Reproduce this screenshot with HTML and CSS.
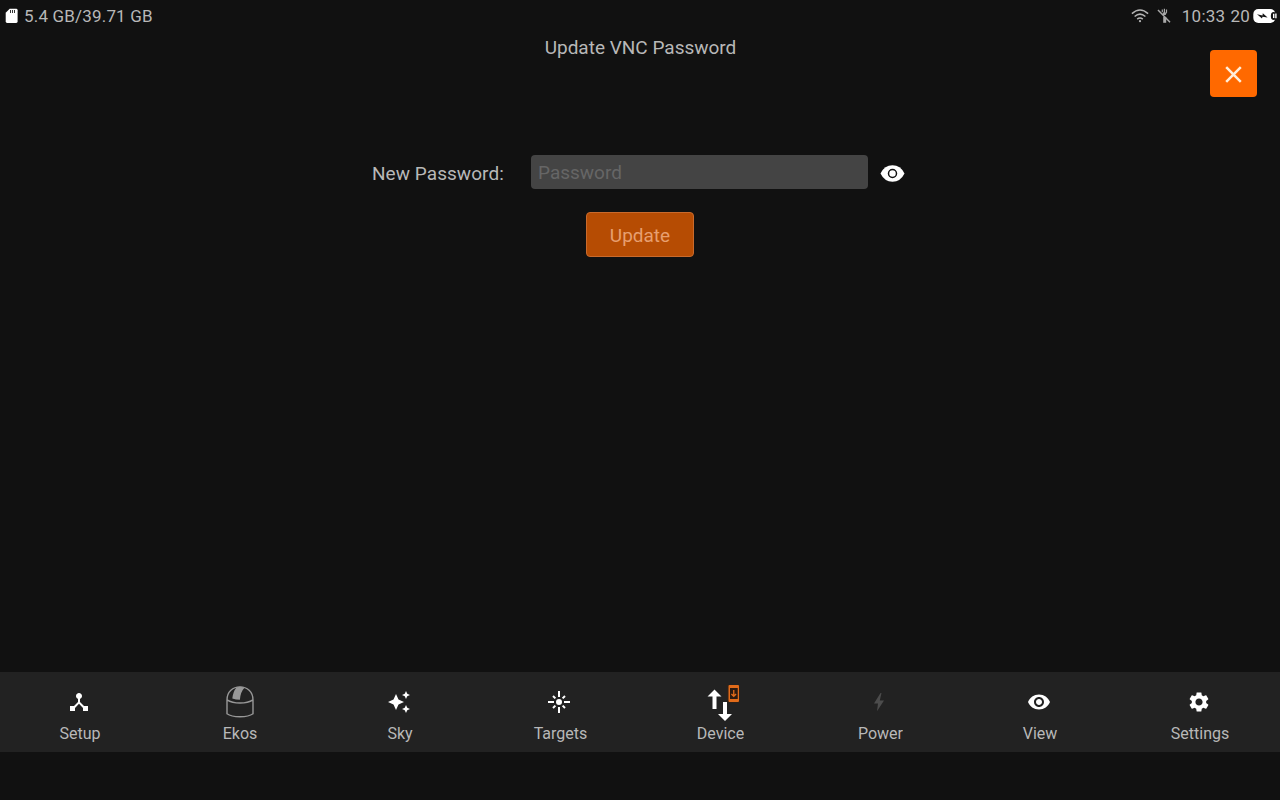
FILE: index.html
```
<!DOCTYPE html>
<html lang="en">
<head>
<meta charset="utf-8">
<title>Update VNC Password</title>
<link rel="stylesheet" href="styles.css">
</head>
<body>
<header class="status">
  <div class="storage">
    <svg width="13" height="16" viewBox="0 0 13 16"><path fill="#fff" d="M4.7 .8H11.2Q12.6 .8 12.6 2.2V13.6Q12.6 15 11.2 15H2.1Q.7 15 .7 13.6V4.8Z"/><path stroke="#333" stroke-width="1" d="M5.5 2v3M7.5 2v3M9.5 2v3"/></svg>
    <span class="storage-text">5.4 GB/39.71 GB</span>
  </div>
  <div class="indicators">
    <svg class="wifi" width="18" height="14" viewBox="0 0 18 14" fill="none" stroke="#b4b4b4" stroke-width="1.5"><path d="M.9 4.6Q9-2.6 17.1 4.6M3.6 7.5Q9 2.8 14.4 7.5M6.2 10.1Q9 7.8 11.8 10.1"/><circle cx="9" cy="12.2" r="1.1" fill="#b4b4b4" stroke="none"/></svg>
    <svg class="mount" width="14" height="16" viewBox="0 0 14 16" fill="none" stroke="#a8a8a8"><path stroke-width="1.5" d="M1 2L13 14.2"/><path stroke-width="1.2" d="M5.3 1.5V4M7.4 .8V5M9.5 1.5V4.3L8 6.5"/><path stroke-width="3" d="M7.2 4.5V7"/><path stroke-width="3" d="M7.7 9V14.8"/></svg>
    <span class="clock">10:33</span>
    <span class="level">20</span>
    <svg class="battery" width="24" height="16" viewBox="0 0 24 16"><rect x=".3" y="1" width="22" height="14" rx="5" fill="#fff"/><path fill="#151515" d="M4 6.200L9.500 7.400L9.800 5.200L14.600 9.400L9.500 8.700L9 10.600Z"/><ellipse cx="20.700" cy="7.900" rx="2.900" ry="4" fill="#151515"/><path stroke="#fff" stroke-width="1.400" d="M20.700 5.700v4.400M22.900 5.500v4.800"/></svg>
  </div>
</header>
<main class="page">
  <div class="heading">
    <h1 class="title">Update VNC Password</h1>
    <button class="close" aria-label="Close"><svg width="17" height="17" viewBox="0 0 17 17"><path d="M1.2 1.2L15.8 15.8M15.8 1.2L1.2 15.8" stroke="#ffeeda" stroke-width="2.500"/></svg></button>
  </div>
  <form class="form">
    <div class="row">
      <label class="label" for="password">New Password:</label>
      <input class="field" id="password" type="password" placeholder="Password">
      <svg class="reveal" width="25" height="17" viewBox="0 0 25 17"><path fill="#fff" d="M.5 8.500Q4.500 .3 12.500 .3T24.500 8.500Q20.500 16.700 12.500 16.700T.5 8.500Z"/><circle cx="12.500" cy="8.500" r="4" fill="none" stroke="#111" stroke-width="1.500"/></svg>
    </div>
    <button class="update" type="button" disabled>Update</button>
  </form>
</main>
<nav class="nav">
  <a class="item"><span class="icon"><svg width="24" height="24" viewBox="0 0 24 24"><path fill="#fff" d="M17 16l-4-4V8.820C14.160 8.400 15 7.300 15 6c0-1.660-1.340-3-3-3S9 4.340 9 6c0 1.300.84 2.400 2 2.820V12l-4 4H3v5h5v-3.050l4-4.200 4 4.200V21h5v-5h-4z"/></svg></span><span class="name">Setup</span></a>
  <a class="item"><span class="icon dome"><svg width="28" height="32" viewBox="0 0 28 32" fill="none" stroke="#989898" stroke-width="1.400"><path d="M1 14C1 5.500 7 .9 14 .9S27 5.500 27 14V27.800Q23 30.800 14 30.800T1 27.800ZM1 13.800Q6 17 14 17T27 13.800"/><path fill="#989898" stroke="none" d="M10.500 1.500Q14.800-.2 18.300 2Q14.400 6 13.900 13.800Q9.800 13.700 6.300 12.500Q7 5.500 10.500 1.500Z"/></svg></span><span class="name">Ekos</span></a>
  <a class="item"><span class="icon"><svg width="24" height="24" viewBox="0 0 24 24"><path fill="#fff" d="M19 9l1.250-2.750L23 5l-2.750-1.250L19 1l-1.250 2.750L15 5l2.750 1.250L19 9zm-7.500.5L9 4 6.500 9.500 1 12l5.500 2.500L9 20l2.500-5.500L17 12l-5.500-2.500zM19 15l-1.250 2.750L15 19l2.750 1.250L19 23l1.250-2.750L23 19l-2.750-1.250L19 15z"/></svg></span><span class="name">Sky</span></a>
  <a class="item"><span class="icon"><svg width="24" height="24" viewBox="0 0 24 24"><path stroke="#fff" stroke-width="2" d="M12 1v6M12 17v6M1 12h6M17 12h6M6 6l2.400 2.400M15.600 15.600L18 18M18 6l-2.400 2.400M8.400 15.600L6 18"/><circle cx="12" cy="12" r="3" fill="#fff"/></svg></span><span class="name clipped">Targets</span></a>
  <a class="item"><span class="icon transfer"><svg width="34" height="36" viewBox="0 0 34 36"><path fill="#fff" d="M7.500 4.400L14.500 11.400H9.500V24H5.500V11.400H.5ZM16 17H20V29H25L18 36L11 29H16Z"/><path fill="#3a2110" d="M20-.5H33V18H20Z" opacity=".45"/><path fill="#e16b1a" fill-rule="evenodd" d="M22.500 0H31Q32 0 32 1V16Q32 17 31 17H22.500Q21.500 17 21.500 16V1Q21.500 0 22.500 0ZM23 3V14H30.500V3Z"/><path fill="#2b1a10" d="M23 3H30.500V14H23Z"/><path stroke="#e16b1a" stroke-width="1.300" fill="none" d="M26.750 5V11.300M24.400 9L26.750 11.300L29.100 9"/></svg></span><span class="name clipped">Device</span></a>
  <a class="item"><span class="icon"><svg width="24" height="24" viewBox="0 0 24 24"><path fill="#4c4c4c" d="M13.500 3L7 13.600h4L10 21.200l7-10.700h-4.200L14.500 3Z"/></svg></span><span class="name clipped">Power</span></a>
  <a class="item"><span class="icon"><svg width="24" height="24" viewBox="0 0 24 24"><path fill="#fff" d="M12 4.500C7 4.500 2.730 7.610 1 12c1.730 4.390 6 7.500 11 7.500s9.270-3.110 11-7.500c-1.730-4.390-6-7.500-11-7.500zM12 17c-2.760 0-5-2.240-5-5s2.240-5 5-5 5 2.240 5 5-2.240 5-5 5zm0-8c-1.660 0-3 1.340-3 3s1.340 3 3 3 3-1.340 3-3-1.340-3-3-3z"/></svg></span><span class="name">View</span></a>
  <a class="item"><span class="icon"><svg width="24" height="24" viewBox="0 0 24 24"><path fill="#fff" d="M19.140 12.940c.04-.3.06-.61.06-.94 0-.32-.02-.64-.07-.94l2.030-1.580c.18-.14.23-.41.12-.61l-1.920-3.320c-.12-.22-.37-.29-.59-.22l-2.390.96c-.5-.38-1.030-.7-1.620-.94l-.36-2.540c-.04-.24-.24-.41-.48-.41h-3.840c-.24 0-.43.17-.47.41l-.36 2.540c-.59.24-1.130.57-1.620.94l-2.390-.96c-.22-.08-.47 0-.59.22L2.740 8.870c-.12.21-.08.47.12.61l2.030 1.580c-.05.3-.09.63-.09.94s.02.64.07.94l-2.030 1.580c-.18.14-.23.41-.12.61l1.920 3.320c.12.22.37.29.59.22l2.390-.96c.5.38 1.030.7 1.620.94l.36 2.540c.05.24.24.41.48.41h3.840c.24 0 .44-.17.47-.41l.36-2.540c.59-.24 1.130-.56 1.620-.94l2.390.96c.22.08.47 0 .59-.22l1.920-3.320c.12-.22.07-.47-.12-.61l-2.010-1.580zM12 15.600c-1.980 0-3.600-1.620-3.600-3.600s1.620-3.600 3.600-3.600 3.600 1.620 3.600 3.600-1.620 3.600-3.600 3.600z"/></svg></span><span class="name">Settings</span></a>
</nav>
</body>
</html>
```
FILE: styles.css
```
* { box-sizing: border-box; }
body {
  margin: 0;
  height: 800px;
  display: flex;
  flex-direction: column;
  overflow: hidden;
  background: #111;
  color: #b8b8b8;
  font-family: Roboto, sans-serif;
}
svg { display: block; flex: none; }
button { padding: 0; font: inherit; }
.status {
  height: 32px;
  display: flex;
  align-items: center;
  justify-content: space-between;
  padding: 0 3px 0 5px;
  font-size: 17px;
  line-height: 32px;
}
.storage, .indicators { display: flex; align-items: center; }
.storage { gap: 6px; letter-spacing: .18px; }
.wifi { margin-right: 8px; }
.mount { margin-right: 11px; }
.clock { margin-right: 5px; letter-spacing: .25px; }
.level { margin-right: 3px; letter-spacing: .25px; }
.page { flex: 1; }
.heading {
  display: grid;
  grid-template-columns: 1fr auto 1fr;
  align-items: start;
  height: 123px;
  padding-right: 23px;
  padding-left: 24px;
}
.title {
  grid-column: 2;
  margin: 4px 0 0;
  font-size: 19px;
  font-weight: 400;
  line-height: 24px;
}
.close {
  justify-self: end;
  display: grid;
  place-items: center;
  width: 47px;
  height: 47px;
  margin-top: 18px;
  padding-top: 2px;
  border: 0;
  border-radius: 4px;
  background: #ff6900;
}
.form {
  display: flex;
  flex-direction: column;
  align-items: center;
  gap: 23px;
}
.row {
  display: flex;
  align-items: center;
  width: 536px;
  height: 34px;
}
.label { width: 159px; padding-top: 2px; font-size: 19px; letter-spacing: .05px; }
.field {
  width: 337px;
  height: 34px;
  padding: 1px 7px 0;
  border: 0;
  border-radius: 4px;
  background: #444;
  color: #bdbdbd;
  font: 19px Roboto, sans-serif;
}
.field::placeholder { color: #666; opacity: 1; }
.reveal { margin: 3px 0 0 12px; }
.update {
  width: 108px;
  height: 45px;
  padding-top: 2px;
  border: 1px solid #c96a2c;
  border-radius: 4px;
  background: #b64c03;
  color: #e79f70;
  font-size: 19px;
}
.nav {
  display: grid;
  grid-template-columns: repeat(8, 1fr);
  height: 80px;
  margin-bottom: 48px;
  background: #222;
}
.item {
  display: flex;
  flex-direction: column;
  align-items: center;
}
.icon {
  display: grid;
  place-items: center;
  height: 52px;
  padding: 8px 2px 0 0;
}
.dome { padding-right: 0; }
.transfer { padding: 10px 0 0 7px; }
.name { font-size: 16px; line-height: 20px; }
.clipped {
  overflow: hidden;
  text-indent: 1px;
  white-space: nowrap;
}
```
